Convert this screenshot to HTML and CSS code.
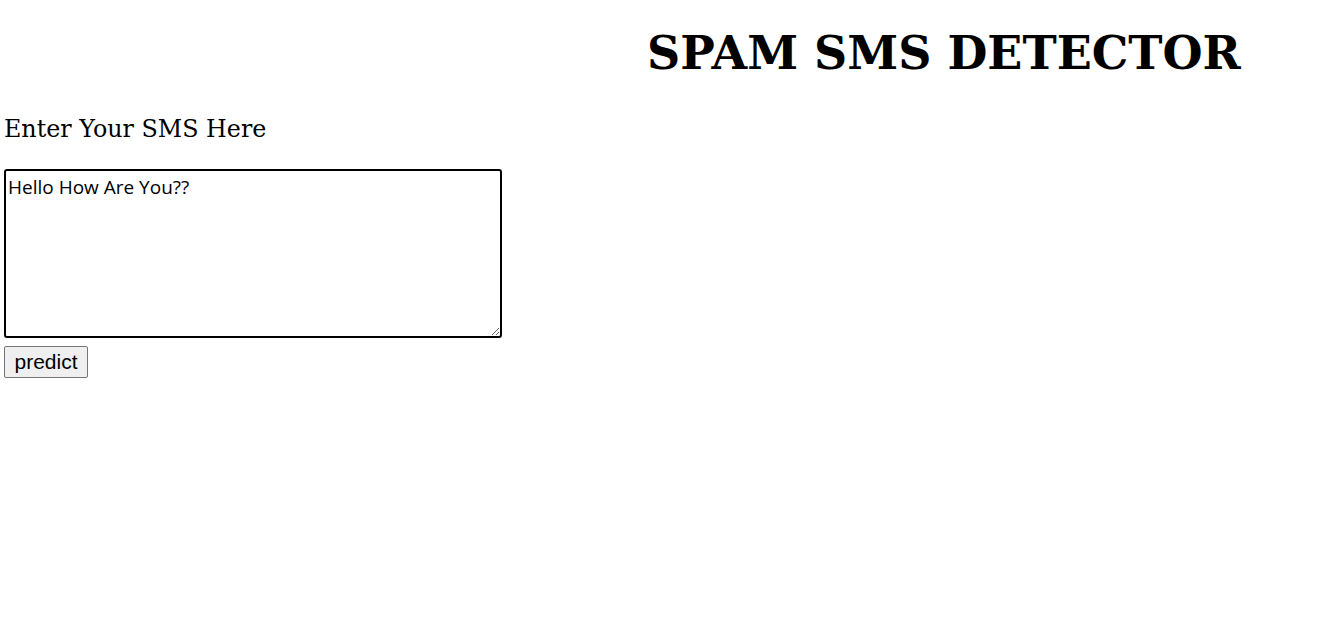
FILE: index.html
```html
<!DOCTYPE html>
<html>
<head>
<meta charset="utf-8">
<title>Spam SMS Detector</title>
<link rel="stylesheet" href="styles.css">
</head>
<body>
<div class="page">
  <h1 class="title">SPAM SMS DETECTOR</h1>
  <form class="form">
    <label class="label" for="sms">Enter Your SMS Here</label>
    <textarea id="sms" class="sms">Hello How Are You??</textarea>
    <button type="button" class="btn">predict</button>
  </form>
</div>
</body>
</html>
```
FILE: styles.css
```css
html, body { margin: 0; padding: 0; background: #fff; }
.page { padding: 0 4px; }
.title {
  margin: 0;
  padding: 26px 0 0 643px;
  font-family: "DejaVu Serif", "Liberation Serif", serif;
  font-weight: bold;
  font-size: 46px;
  line-height: 54px;
  color: #000;
}
.form { display: flex; flex-direction: column; align-items: flex-start; }
.label {
  margin-top: 34px;
  font-family: "DejaVu Serif", "Liberation Serif", serif;
  font-size: 23.8px;
  line-height: 30px;
  color: #000;
}
.sms {
  margin-top: 25px;
  box-sizing: border-box;
  width: 498px;
  height: 169px;
  border: 2px solid #000;
  border-radius: 3px;
  padding: 3px 2px;
  font-family: "Open Sans", "Noto Sans", sans-serif;
  font-size: 19px;
  line-height: 26px;
  color: #000;
  resize: both;
  outline: none;
}
.btn {
  margin-top: 8px;
  box-sizing: border-box;
  width: 84px;
  height: 32px;
  padding: 0;
  background: #efefef;
  border: 1px solid #767676;
  border-radius: 2px;
  font-family: "Liberation Sans", Arial, sans-serif;
  font-size: 21px;
  color: #000;
}
```
